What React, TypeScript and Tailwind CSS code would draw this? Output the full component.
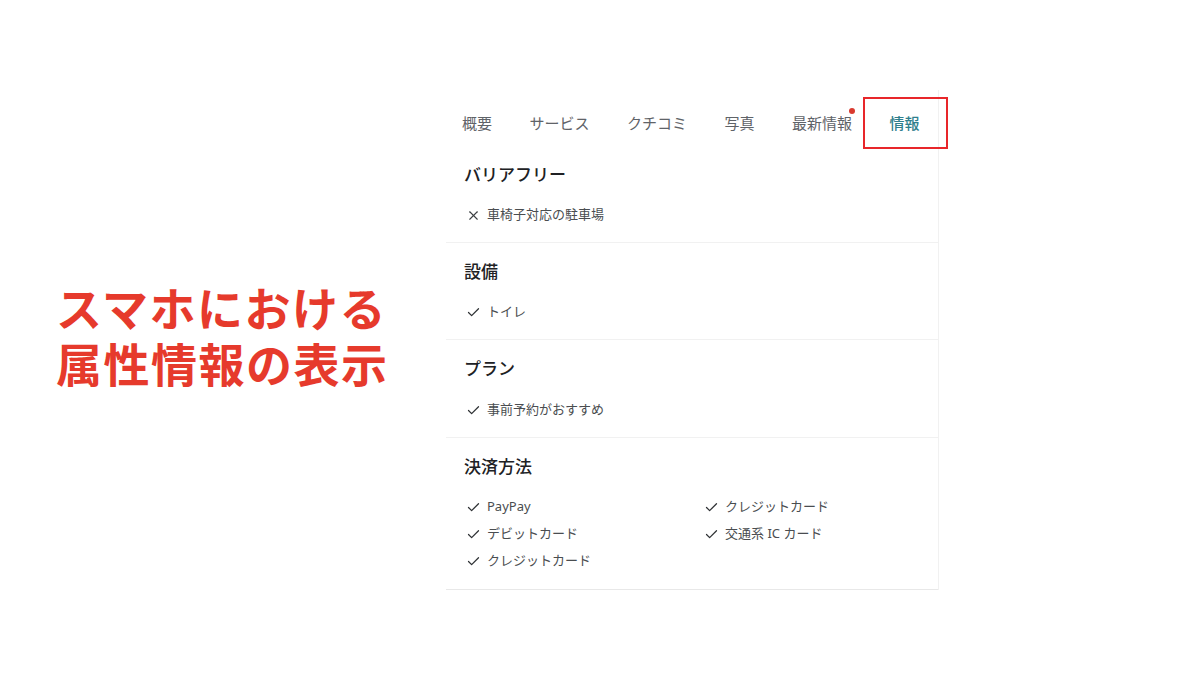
import { Check, X } from "lucide-react";

const tabs = ["概要", "サービス", "クチコミ", "写真", "最新情報", "情報"];

interface Item {
  label: string;
  ok: boolean;
}

interface Section {
  title: string;
  items: Item[];
  cols?: number;
}

const sections: Section[] = [
  { title: "バリアフリー", items: [{ label: "車椅子対応の駐車場", ok: false }] },
  { title: "設備", items: [{ label: "トイレ", ok: true }] },
  { title: "プラン", items: [{ label: "事前予約がおすすめ", ok: true }] },
  {
    title: "決済方法",
    cols: 2,
    items: [
      { label: "PayPay", ok: true },
      { label: "クレジットカード", ok: true },
      { label: "デビットカード", ok: true },
      { label: "交通系 IC カード", ok: true },
      { label: "クレジットカード", ok: true },
    ],
  },
];

function AttrItem({ item }: { item: Item }) {
  return (
    <div className="flex items-center h-[20px] text-[13px] text-[#4a4d50]">
      <span className="w-[23px] pl-[2px] flex items-center">
        {item.ok ? (
          <Check size={15} strokeWidth={2} className="text-[#2f3235]" />
        ) : (
          <X size={15} strokeWidth={1.8} className="text-[#3c4043]" />
        )}
      </span>
      <span>{item.label}</span>
    </div>
  );
}

export default function App() {
  return (
    <div
      className="w-[1200px] h-[673px] bg-white flex items-start"
      style={{ fontFamily: '"Noto Sans", "Noto Sans CJK JP", sans-serif' }}
    >
      {/* caption */}
      <div className="w-[446px] pt-[278px] pl-[56px]">
        <p
          className="text-[46px] leading-[56px] font-bold text-[#e63a2c] tracking-[1.5px]"
          style={{ fontFamily: '"Noto Sans CJK JP", sans-serif' }}
        >
          スマホにおける
          <br />
          属性情報の表示
        </p>
      </div>

      {/* phone panel */}
      <div className="w-[493px] mt-[90px] border-r border-[#f1f1f1] pt-[7px]">
        <div className="flex items-center h-[52px] pl-[16px] gap-[37.5px] text-[15px] text-[#5f6368]">
          {tabs.map((t, i) => {
            const active = i === tabs.length - 1;
            const dot = t === "最新情報";
            return (
              <div key={t} className={`relative ${active ? "text-[#2f7f8d] font-medium" : ""}`}>
                {t}
                {dot && (
                  <span className="absolute -right-[3px] -top-[4px] w-[6px] h-[6px] rounded-full bg-[#d93a2f]" />
                )}
                {active && (
                  <span className="absolute -left-[27px] -right-[28px] -top-[15px] -bottom-[15px] border-2 border-[#e8262a]" />
                )}
              </div>
            );
          })}
        </div>

        {sections.map((s, i) => {
          const last = i === sections.length - 1;
          return (
            <div
              key={s.title}
              className={`${i === 0 ? "pt-[14px]" : "pt-[17px]"} ${last ? "pb-[18px]" : "pb-[17px]"} pl-[18px] border-b ${
                last ? "border-[#e8e8e8]" : "border-[#f1f1f1]"
              }`}
            >
              <h3 className="h-[24px] leading-[24px] text-[17px] font-medium text-[#202124]">{s.title}</h3>
              <div
                className={`${i === 2 ? "mt-[19px]" : "mt-[18px]"} ${
                  s.cols === 2 ? "grid grid-cols-[238px_1fr] gap-y-[7px]" : "flex flex-col"
                }`}
              >
                {s.items.map((it, j) => (
                  <AttrItem key={j} item={it} />
                ))}
              </div>
            </div>
          );
        })}
      </div>
    </div>
  );
}
